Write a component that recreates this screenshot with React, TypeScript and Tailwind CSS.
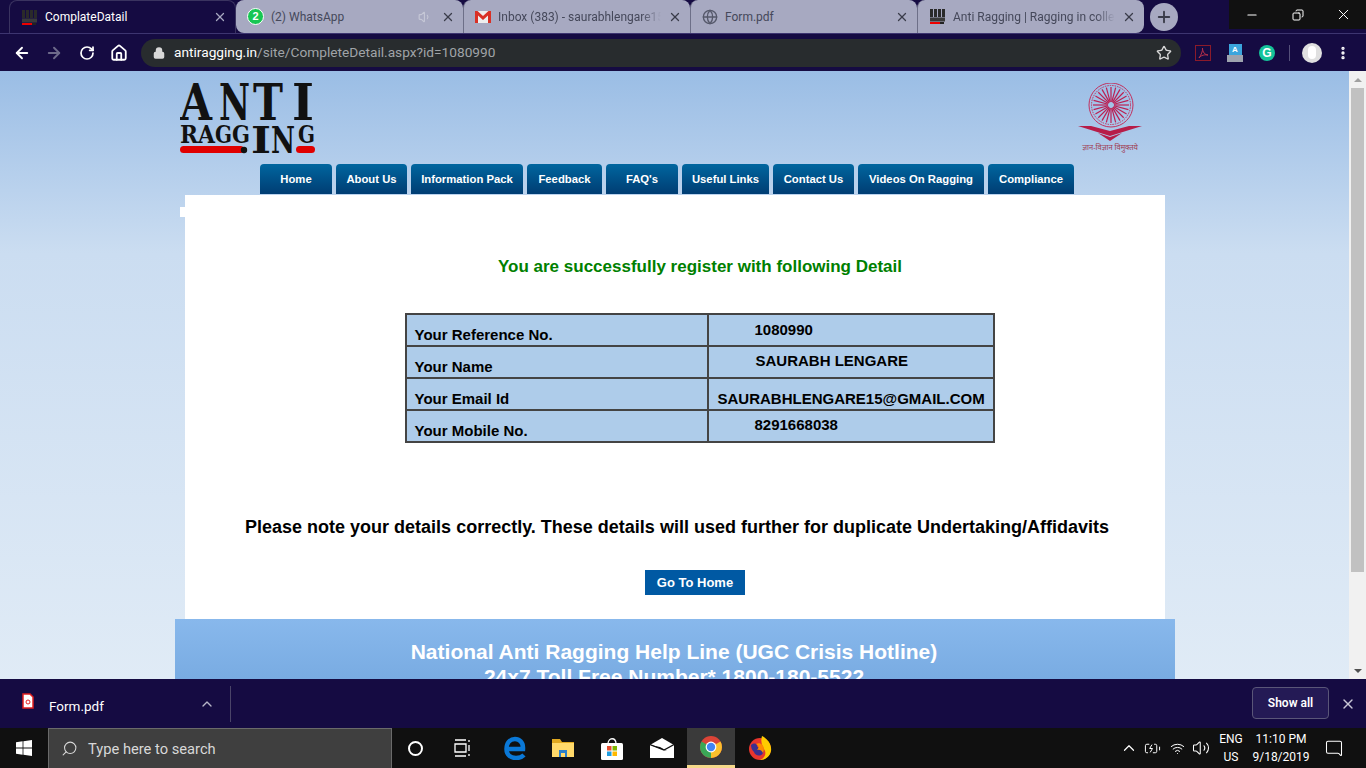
import React from "react";
import { ArrowLeft, ArrowRight, RotateCw, Home, Lock, Star, X, Plus, Minus, Copy, MoreVertical, Globe, ChevronUp, Search, Wifi, Volume2, BatteryCharging, MessageSquare, Volume1 } from "lucide-react";

const F = { fontFamily: '"Liberation Sans", Arial, sans-serif' };
const UI = { fontFamily: 'Roboto, "Noto Sans", sans-serif' };

function MiniLogo() {
  return (
    <svg width="17" height="17" viewBox="0 0 17 17" className="shrink-0">
      <rect x="1" y="1" width="3" height="8" fill="#2a2a2a" />
      <rect x="5" y="1" width="3" height="8" fill="#2a2a2a" />
      <rect x="9" y="1" width="3" height="8" fill="#2a2a2a" />
      <rect x="13" y="1" width="3" height="8" fill="#2a2a2a" />
      <rect x="1" y="9.500" width="15" height="4" fill="#3a3a3a" />
      <rect x="1" y="14" width="10" height="2" fill="#e00" />
      <rect x="11" y="14" width="4" height="2" fill="#222" />
    </svg>
  );
}

function Tab({ icon, title, active, extra, fade, sep, bl, br }: { icon: React.ReactNode; title: string; active?: boolean; extra?: React.ReactNode; fade?: boolean; sep?: boolean; bl?: boolean; br?: boolean }) {
  return (
    <div className={`relative w-[227px] h-[33px] flex items-center pl-[11px] pr-[8px] gap-[7px] text-[12px] rounded-t-lg ${active ? "text-white border border-b-0 border-[#3a3360]" : "bg-[#a7a9c1] text-[#45485a]"} ${sep ? "border-l border-[#6d6f88]" : ""} ${bl ? "rounded-bl-lg" : ""} ${br ? "rounded-br-lg" : ""}`} style={UI}>
      {icon}
      <span className={`flex-1 whitespace-nowrap overflow-hidden ${fade ? "[mask-image:linear-gradient(to_right,black_88%,transparent)]" : ""}`}>{title}</span>
      {extra}
      <X size={14} strokeWidth={2.200} className={active ? "text-[#a7a9c1]" : "text-[#3a3c4a]"} />
    </div>
  );
}

const LOGO: [string, number, number, number, number][] = [
  ["A", 0, 37, 32, 50],
  ["N", 39, 37, 31, 50],
  ["T", 73, 37, 30, 50],
  ["I", 112, 37, 22, 50],
  ["R", 0, 60, 18, 25],
  ["A", 18, 60, 17, 25],
  ["G", 35, 60, 17, 25],
  ["G", 52, 60, 18, 25],
  ["I", 71, 70, 20, 38],
  ["N", 91, 70, 24, 38],
  ["G", 118, 60, 17, 25],
];

function Logo() {
  return (
    <svg width="136" height="72" viewBox="0 0 136 72" className="shrink-0" style={{ fontFamily: '"DejaVu Serif", serif', fontWeight: 700 }}>
      <g fill="#111">
        {LOGO.map(([c, x, y, w, s], i) => (
          <text key={i} x={x} y={y} fontSize={s} textLength={w} lengthAdjust="spacingAndGlyphs">{c}</text>
        ))}
      </g>
      <rect x="0" y="63" width="64" height="7" rx="3.500" fill="#e00000" />
      <circle cx="64" cy="67" r="3.200" fill="#111" />
      <rect x="116" y="63" width="19" height="7" rx="3.500" fill="#e00000" />
    </svg>
  );
}

function Emblem() {
  const spokes = Array.from({ length: 24 }, (_, i) => (i * Math.PI) / 12);
  return (
    <div className="w-[64px] flex flex-col items-center">
      <svg width="64" height="58" viewBox="0 0 64 58">
        <circle cx="33" cy="22" r="22" fill="none" stroke="#c2305f" strokeWidth="1" />
        <circle cx="33" cy="22" r="19.500" fill="none" stroke="#c2305f" strokeWidth="1" strokeDasharray="1.500 1" />
        {spokes.map((a, i) => (
          <line key={i} x1={33 + 3 * Math.cos(a)} y1={22 + 3 * Math.sin(a)} x2={33 + 18 * Math.cos(a)} y2={22 + 18 * Math.sin(a)} stroke="#bb1f52" strokeWidth="1.200" />
        ))}
        <path d="M0 43 L32 53 L64 43 L51 43 L32 48 L13 43 Z" fill="#b71c48" />
        <path d="M20 50 L32 58 L44 50 L32 54 Z" fill="#b71c48" />
      </svg>
      <span className="text-[7.500px] leading-[12px] text-[#a03a50] whitespace-nowrap" style={{ fontFamily: '"Noto Sans", sans-serif' }}>ज्ञान-विज्ञान विमुक्तये</span>
    </div>
  );
}

const NAV: [string, number][] = [
  ["Home", 72], ["About Us", 71], ["Information Pack", 112], ["Feedback", 75], ["FAQ's", 72],
  ["Useful Links", 87], ["Contact Us", 81], ["Videos On Ragging", 126], ["Compliance", 86],
];

const ROWS: [string, string, string][] = [
  ["Your Reference No.", "1080990", "pl-[46px] pt-[1px]"],
  ["Your Name", "SAURABH LENGARE", "pl-[47px] pb-[1px]"],
  ["Your Email Id", "SAURABHLENGARE15@GMAIL.COM", "pl-[9px] pt-[11px]"],
  ["Your Mobile No.", "8291668038", "pl-[46px] pb-[1px]"],
];

function Windows() {
  return (
    <svg width="16" height="16" viewBox="0 0 16 16"><path fill="#fff" d="M0 2.200 6.600 1.300v6.300H0zM7.400 1.200 16 0v7.600H7.400zM0 8.400h6.600v6.300L0 13.800zM7.400 8.400H16V16l-8.600-1.200z" /></svg>
  );
}

function Chrome() {
  return (
    <svg width="24" height="24" viewBox="0 0 24 24">
      <circle cx="12" cy="12" r="11" fill="#db4437" />
      <path d="M12 12 L21.500 6.500 A11 11 0 0 1 12 23 Z" fill="#fbc02d" />
      <path d="M12 12 L12 23 A11 11 0 0 1 2.500 6.500 Z" fill="#3aa757" />
      <circle cx="12" cy="12" r="5.400" fill="#fff" />
      <circle cx="12" cy="12" r="4.200" fill="#4285f4" />
    </svg>
  );
}

function Firefox() {
  return (
    <svg width="24" height="26" viewBox="0 0 24 26">
      <circle cx="12" cy="14" r="11" fill="#e8352e" />
      <path d="M14 1 C20 4 24 10 23 16 C22 21 18 25 12 25 C17 23 19 18 16 14 C15 11 12 8 14 1 Z" fill="#ffcb00" />
      <path d="M3 10 C7 7 10 9 9 12 C13 11 17 14 15 18 C13 22 7 21 6 17 C4 15 3 13 3 10Z" fill="#3b2f8f" />
      <path d="M8 9 C13 6 18 12 15 18 C14 15 11 14 9 15 C11 13 11 11 8 9Z" fill="#ff8a00" />
    </svg>
  );
}

export default function App() {
  return (
    <div className="w-[1366px] h-[768px] overflow-hidden flex flex-col bg-[#150b42]" style={F}>
      {/* tab strip */}
      <div className="h-[33px] shrink-0 flex bg-[#150b42]">
        <div className="w-[9px]" />
        <Tab active title="ComplateDatail" icon={<MiniLogo />} />
        <Tab bl title="(2) WhatsApp" icon={
          <span className="w-[17px] h-[17px] rounded-full bg-[#17c653] text-white text-[11px] font-bold flex items-center justify-center border border-white shrink-0" style={F}>2</span>
        } extra={<Volume1 size={14} className="text-[#c5c7d6] mr-[2px]" />} />
        <Tab sep fade title="Inbox (383) - saurabhlengare15" icon={
          <svg width="16" height="12" viewBox="0 0 16 12" className="shrink-0"><rect width="16" height="12" fill="#eee" /><path d="M0 0h2.500L8 5l5.500-5H16v12h-3V4.500L8 9 3 4.500V12H0z" fill="#d93025" /></svg>
        } />
        <Tab sep title="Form.pdf" icon={<Globe size={16} className="text-[#55586a] shrink-0" fill="#a7a9c1" />} />
        <Tab sep br fade title="Anti Ragging | Ragging in colle" icon={<MiniLogo />} />
        <div className="ml-[6px] mt-[3px] w-[28px] h-[28px] rounded-full bg-[#a7a9c1] flex items-center justify-center text-[#3a3c4a]">
          <Plus size={18} strokeWidth={2.500} />
        </div>
        <div className="flex-1" />
        <div className="w-[137px] h-[29px] bg-[#111111] flex items-center text-white">
          <div className="w-[46px] flex justify-center"><Minus size={14} /></div>
          <div className="w-[46px] flex justify-center"><Copy size={12} className="-scale-x-100" /></div>
          <div className="w-[45px] flex justify-center"><X size={17} strokeWidth={1.400} /></div>
        </div>
      </div>
      {/* toolbar */}
      <div className="h-[38px] shrink-0 flex items-center border-t border-[#3d3570] pl-[13px] pr-[9px] text-white">
        <ArrowLeft size={18} strokeWidth={2.500} />
        <ArrowRight size={18} strokeWidth={2.500} className="ml-[14px] text-[#6d6a8a]" />
        <RotateCw size={16} strokeWidth={2.600} className="ml-[16px]" />
        <Home size={18} strokeWidth={2.400} className="ml-[15px]" />
        <div className="ml-[13px] w-[1040px] h-[28px] rounded-full bg-[#282c2e] flex items-center pl-[12px] pr-[9px]">
          <Lock size={12} strokeWidth={3} fill="#d8d8d8" className="text-[#d8d8d8]" />
          <span className="ml-[9px] text-[13.700px] text-white" style={UI}>antiragging.in<span className="text-[#a0a4a8]">/site/CompleteDetail.aspx?id=1080990</span></span>
          <div className="flex-1" />
          <Star size={16} className="text-[#d8d8d8]" strokeWidth={2} />
        </div>
        <div className="ml-[14px] w-[16px] h-[16px] border border-[#8b1a2a] flex items-center justify-center">
          <svg width="12" height="12" viewBox="0 0 12 12"><path d="M2 11 C4 8 6 4 5.500 1 C5.500 5 8 8 11 8 C8 7.500 4 8 2 11Z" fill="none" stroke="#b8304a" strokeWidth="1" /></svg>
        </div>
        <div className="ml-[16px] w-[16px] h-[18px] flex flex-col items-center">
          <div className="w-[13px] h-[11px] bg-[#3ba5dd] text-white text-[8px] leading-[11px] text-center font-bold">A</div>
          <div className="w-[16px] h-[7px] bg-[#9ea3ae]" />
        </div>
        <div className="ml-[16px] w-[16px] h-[16px] rounded-full bg-[#15c39a] text-white text-[12px] leading-[16px] text-center font-bold">G</div>
        <div className="ml-[14px] w-px h-[16px] bg-[#55507a]" />
        <div className="ml-[12px] w-[20px] h-[20px] rounded-full bg-[#e0e0e0] flex items-center justify-center"><div className="w-[8px] h-[13px] rounded-full bg-white" /></div>
        <MoreVertical size={16} strokeWidth={3} className="ml-[13px]" />
      </div>
      {/* page */}
      <div className="h-[608px] shrink-0 flex overflow-hidden">
        <div className="w-[1349px] h-full overflow-hidden bg-gradient-to-b from-[#9abde5] via-[#cbddf1] via-30% to-[#e0ebf6] flex flex-col items-start pl-[175px]">
          <div className="w-[1000px] shrink-0 flex flex-col">
            <div className="h-[93px] pt-[12px] pl-[5px] pr-[33px] flex justify-between">
              <Logo />
              <Emblem />
            </div>
            <div className="h-[31px] pl-[85px] flex gap-[4px]">
              {NAV.map(([n, w]) => (
                <div key={n} style={{ width: w }} className="h-[30px] rounded-t-[4px] bg-gradient-to-b from-[#00669f] to-[#003d73] text-white text-[11.300px] font-bold flex items-center justify-center whitespace-nowrap pt-[1px]">{n}</div>
              ))}
            </div>
            <div className="mx-[10px] flex">
              <div className="w-[981px] h-[424px] bg-white flex flex-col items-center relative">
                <div className="absolute left-[-5px] top-[12px] w-[5px] h-[10px] bg-white" />
                <div className="mt-[62px] ml-[50px] text-[#008000] text-[17px] font-bold leading-[20px]">You are successfully register with following Detail</div>
                <div className="mt-[36px] ml-[49px] w-[590px] border-2 border-[#444] bg-[#aeccea] text-black font-bold">
                  {ROWS.map(([a, b, pb], i) => (
                    <div key={a} className={`flex ${i ? "h-[32px] border-t-2 border-[#444]" : "h-[30px]"}`}>
                      <div className="w-[302px] border-r-2 border-[#444] pl-[8px] flex items-end text-[15px] leading-[20px]">{a}</div>
                      <div className={`flex-1 flex items-center text-[15px] whitespace-nowrap ${pb}`}>{b}</div>
                    </div>
                  ))}
                </div>
                <div className="mt-[73px] text-[18px] font-bold leading-[22px] text-black whitespace-nowrap pl-[4px]">Please note your details correctly. These details will used further for duplicate Undertaking/Affidavits</div>
                <div className="mt-[32px] ml-[40px] w-[100px] h-[25px] bg-[#0059a3] text-white text-[13px] font-bold flex items-center justify-center">Go To Home</div>
              </div>
            </div>
            <div className="h-[120px] bg-gradient-to-b from-[#88b8ec] to-[#6a9fd8] flex flex-col items-center pt-[20px] text-white text-[21px] font-bold leading-[25px] pr-[2px]">
              <div>National Anti Ragging Help Line (UGC Crisis Hotline)</div>
              <div>24x7 Toll Free Number* 1800-180-5522</div>
            </div>
          </div>
        </div>
        <div className="w-[17px] h-full bg-[#f1f1f1] flex flex-col">
          <div className="h-[17px] flex items-center justify-center"><div className="w-0 h-0 border-x-[4px] border-x-transparent border-b-[4px] border-b-[#a0a0a0]" /></div>
          <div className="h-[484px] mx-[2px] bg-[#c1c1c1]" />
          <div className="flex-1" />
          <div className="h-[17px] flex items-center justify-center"><div className="w-0 h-0 border-x-[4px] border-x-transparent border-t-[4px] border-t-[#505050]" /></div>
        </div>
      </div>
      {/* download bar */}
      <div className="h-[49px] shrink-0 bg-[#150b42] flex items-center text-white">
        <div className="w-[231px] h-[36px] border-r border-[#4a4468] flex items-center pl-[22px] text-[13.500px]" style={UI}>
          <svg width="12" height="16" viewBox="0 0 12 16" className="shrink-0 -mt-[5px]"><path d="M1 1h7l3 3v11H1z" fill="#fff" stroke="#e02020" strokeWidth="1.500" /><circle cx="6" cy="9" r="2" fill="none" stroke="#e02020" /></svg>
          <span className="ml-[15px] pt-[6px]">Form.pdf</span>
          <div className="flex-1" />
          <ChevronUp size={16} strokeWidth={2} className="text-[#b8b6c8] mr-[15px]" />
        </div>
        <div className="flex-1" />
        <div className="w-[77px] h-[32px] rounded-[4px] border border-[#5a5678] bg-[#241a55] text-[12px] font-semibold flex items-center justify-center -mt-[2px]" style={UI}>Show all</div>
        <X size={16} strokeWidth={2} className="ml-[11px] mr-[10px] text-[#c9c7d6]" />
      </div>
      {/* taskbar */}
      <div className="h-[40px] shrink-0 bg-[#101010] flex items-center text-white" style={UI}>
        <div className="w-[48px] flex justify-center"><Windows /></div>
        <div className="w-[344px] h-[40px] bg-[#3f3f3f] border border-[#6a6a6a] border-b-0 flex items-center pl-[12px] text-[14.700px] text-[#d8d8d8]">
          <Search size={17} strokeWidth={1.500} className="-scale-x-100" />
          <span className="ml-[10px] pt-[1px]">Type here to search</span>
        </div>
        <div className="w-[47px] flex justify-center"><div className="w-[15px] h-[15px] rounded-full border-[2.500px] border-white" /></div>
        <div className="w-[48px] flex justify-center">
          <svg width="18" height="18" viewBox="0 0 18 18" fill="none" stroke="#fff" strokeWidth="1.300"><path d="M1 1h11M1 17h11M1 5h11v8H1zM15 1v2M15 6v6M15 15v2" /></svg>
        </div>
        <div className="w-[52px] flex justify-center pl-[4px]">
          <svg width="22" height="24" viewBox="0 0 22 24" fill="none" stroke="#0a78d7" strokeWidth="4.500"><path d="M3 13 H19 C19.500 6 15 3 11 3 C6 3 2.500 7 2.500 13 C2.500 19 7 22 12 22 C15 22 18 21 20 19" /></svg>
        </div>
        <div className="w-[48px] flex justify-center">
          <svg width="22" height="20" viewBox="0 0 22 20"><path d="M0 1h8l2 3h12v15H0z" fill="#e0a820" /><rect x="0" y="5" width="22" height="14" fill="#ffd96a" /><rect x="7" y="12" width="8" height="7" fill="#2a7fc9" /><rect x="9" y="15" width="4" height="4" fill="#ffd96a" /></svg>
        </div>
        <div className="w-[50px] flex justify-center">
          <svg width="24" height="24" viewBox="0 0 24 24"><path d="M8 8 C8 1 16 1 16 8" fill="none" stroke="#fff" strokeWidth="1.300" /><rect x="1" y="7" width="22" height="17" rx="1.500" fill="#fff" /><rect x="7" y="10" width="4.500" height="4.500" fill="#e74c2e" /><rect x="12.500" y="10" width="4.500" height="4.500" fill="#7db600" /><rect x="7" y="15.500" width="4.500" height="4.500" fill="#1f9de0" /><rect x="12.500" y="15.500" width="4.500" height="4.500" fill="#ffb900" /></svg>
        </div>
        <div className="w-[50px] flex justify-center">
          <svg width="24" height="20" viewBox="0 0 24 20"><path d="M0 7 12 0l12 7v13H0z" fill="#fff" /><path d="M0 7 17 13 10 9z" fill="#101010" /><path d="M0 6.500 14 12 24 6.500" fill="none" stroke="#101010" strokeWidth="1.300" /></svg>
        </div>
        <div className="w-[48px] h-[40px] bg-[#3a3a3a] border-b-[3px] border-[#f5d98a] flex items-center justify-center"><Chrome /></div>
        <div className="w-[50px] flex justify-center"><Firefox /></div>
        <div className="flex-1" />
        <ChevronUp size={18} strokeWidth={1.600} />
        <BatteryCharging size={17} strokeWidth={1.400} className="ml-[6px]" />
        <Wifi size={15} strokeWidth={1.600} className="ml-[9px]" />
        <Volume2 size={18} strokeWidth={1.400} className="ml-[7px]" />
        <div className="ml-[8px] w-[26px] text-center text-[12px] leading-[18px]"><div>ENG</div><div>US</div></div>
        <div className="ml-[3px] w-[68px] text-center text-[12px] leading-[18px]"><div>11:10 PM</div><div>9/18/2019</div></div>
        <MessageSquare size={18} strokeWidth={1.400} className="ml-[10px] mr-[23px] -scale-x-100" />
      </div>
    </div>
  );
}
